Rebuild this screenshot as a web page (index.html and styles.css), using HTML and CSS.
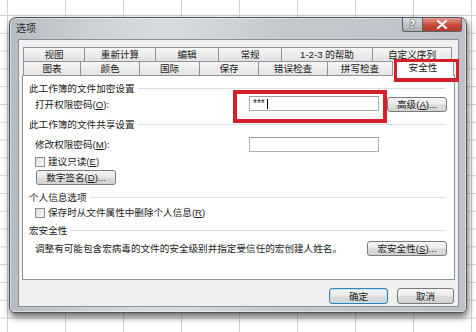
FILE: index.html
```html
<!DOCTYPE html>
<html lang="zh-CN">
<head>
    <meta charset="UTF-8">
    <title>选项</title>
    <link rel="stylesheet" href="styles.css">
</head>
<body>
<div class="dialog">
    <div class="titlebar">
        <span class="title">选项</span>
        <div class="cap_btns">
            <div class="cap_btn help">?</div>
            <div class="cap_btn close">
                <svg width="12" height="9" viewBox="0 0 12 9"><path d="M2 1 L10 8 M10 1 L2 8" stroke="#fff" stroke-width="2.2" stroke-linecap="round"/></svg>
            </div>
        </div>
    </div>
    <div class="client">
        <div class="tabs">
            <div class="tab_row row1">
                <div class="tab">视图</div>
                <div class="tab">重新计算</div>
                <div class="tab">编辑</div>
                <div class="tab">常规</div>
                <div class="tab">1-2-3 的帮助</div>
                <div class="tab">自定义序列</div>
            </div>
            <div class="tab_row row2">
                <div class="tab">图表</div>
                <div class="tab">颜色</div>
                <div class="tab">国际</div>
                <div class="tab">保存</div>
                <div class="tab">错误检查</div>
                <div class="tab">拼写检查</div>
                <div class="tab active">安全性</div>
            </div>
        </div>
        <div class="panel">
            <div class="group g1"><span>此工作簿的文件加密设置</span></div>
            <div class="field_row r_open">
                <span>打开权限密码(<u>O</u>):</span>
                <div class="input">***<i class="caret"></i></div>
                <div class="btn"><span>高级(<u>A</u>)...</span></div>
            </div>
            <div class="group g2"><span>此工作簿的文件共享设置</span></div>
            <div class="field_row r_modify">
                <span>修改权限密码(<u>M</u>):</span>
                <div class="input"></div>
            </div>
            <div class="check_row c1"><i class="box"></i><span>建议只读(<u>E</u>)</span></div>
            <div class="btn sign"><span>数字签名(<u>D</u>)...</span></div>
            <div class="group g3"><span>个人信息选项</span></div>
            <div class="check_row c2"><i class="box"></i><span>保存时从文件属性中删除个人信息(<u>R</u>)</span></div>
            <div class="group g4"><span>宏安全性</span></div>
            <div class="macro_row">
                <span>调整有可能包含宏病毒的文件的安全级别并指定受信任的宏创建人姓名。</span>
                <div class="btn macro"><span>宏安全性(<u>S</u>)...</span></div>
            </div>
        </div>
        <div class="footer">
            <div class="btn ok">确定</div>
            <div class="btn cancel">取消</div>
        </div>
    </div>
    <div class="mark mark_tab"></div>
    <div class="mark mark_pw"></div>
</div>
</body>
</html>
```

FILE: styles.css
```css
*{
    box-sizing: border-box;
    margin: 0;
    padding: 0;
}
body {
    width: 476px;
    height: 332px;
    overflow: hidden;
    padding: 17px 0 0 9px;
    background-color: #fff;
    background-image:
        linear-gradient(to right, #d2d2d2 1px, transparent 1px),
        linear-gradient(to bottom, #d2d2d2 1px, transparent 1px);
    background-size: 58px 17.8px;
    background-position: 7px 15px;
    font-family: "Liberation Sans", "Noto Sans CJK SC", sans-serif;
    font-size: 9.6px;
    color: #1a1a1a;
}
.dialog {
    position: relative;
    width: 458px;
    height: 296px;
    border: 1px solid #4f545a;
    border-radius: 7px 7px 5px 5px;
    background: linear-gradient(to right, #b6bcc2 0%, #cfd3d7 20%, #d9dcdf 35%, #c4c9ce 60%, #bcc2c8 100%);
    box-shadow: 1px 4px 7px rgba(0, 0, 0, 0.6), inset 0 0 0 1px rgba(255, 255, 255, 0.45);
}
.titlebar {
    height: 21px;
    display: flex;
    justify-content: space-between;
    padding-left: 6px;
}
.title {
    font-size: 10px;
    line-height: 21px;
    color: #2a2a2a;
}
.cap_btns {
    display: flex;
    margin-right: 4px;
}
.cap_btn {
    height: 14px;
    border: 1px solid #5b6066;
    border-top: 0;
    display: flex;
    justify-content: center;
    align-items: center;
}
.help {
    width: 20px;
    border-radius: 0 0 0 3px;
    border-right: 0;
    background: linear-gradient(#d8dcdf, #a9afb5);
    color: #fff;
    font-family: "DejaVu Sans", sans-serif;
    font-size: 10px;
    font-weight: 700;
    text-shadow: 0 0 2px #333, 0 0 1px #333;
}
.close {
    width: 40px;
    border-radius: 0 0 3px 0;
    background: linear-gradient(#e49a8e, #c9483a 55%, #b5392c);
}
.client {
    height: 268px;
    margin: 0 7px 0 8px;
    background: #f0f0f0;
    border: 1px solid #8b9096;
    padding: 7px 3px 0;
}
.tabs {
    margin-left: 1px;
}
.tab_row {
    display: flex;
    align-items: flex-end;
    height: 14px;
}
.tab {
    height: 14px;
    border: 1px solid #8f949a;
    border-bottom: 0;
    border-left: 0;
    background: linear-gradient(#f6f6f6, #e3e3e3);
    text-align: center;
    line-height: 13px;
    white-space: nowrap;
}
.tab:first-child {
    border-left: 1px solid #8f949a;
}
.row1 .tab:nth-child(1) { width: 62px; }
.row1 .tab:nth-child(2) { width: 71px; }
.row1 .tab:nth-child(3) { width: 63px; }
.row1 .tab:nth-child(4) { width: 63px; }
.row1 .tab:nth-child(5) { width: 91px; }
.row1 .tab:nth-child(6) { width: 79px; }
.row2 .tab:nth-child(1) { width: 58px; }
.row2 .tab:nth-child(2) { width: 59px; }
.row2 .tab:nth-child(3) { width: 60px; }
.row2 .tab:nth-child(4) { width: 59px; }
.row2 .tab:nth-child(5) { width: 69px; }
.row2 .tab:nth-child(6) { width: 65px; }
.tab.active {
    width: 61px;
    height: 17px;
    margin-bottom: -1px;
    background: #fff;
    position: relative;
    z-index: 2;
    line-height: 16px;
}
.panel {
    height: 205px;
    background: #fff;
    border: 1px solid #8f949a;
    padding: 0 9px 0 6px;
    display: flex;
    flex-direction: column;
}
.group {
    height: 13px;
    display: flex;
    align-items: center;
    gap: 3px;
    line-height: 13px;
}
.group::after {
    content: "";
    flex: 1;
    height: 1px;
    background: #d8dfe4;
}
.g1 { margin-top: 6px; }
.g2 { margin-top: 6px; }
.g3 { margin-top: 6px; }
.g4 { margin-top: 5px; }
.field_row {
    display: grid;
    grid-template-columns: 206px 130px 60px;
    column-gap: 8px;
    align-items: center;
    padding-left: 6px;
    height: 16px;
    line-height: 13px;
}
.r_open { margin-top: 1px; }
.r_modify { margin-top: 5px; }
.input {
    height: 15px;
    border: 1px solid #abadb3;
    border-top-color: #9a9ca2;
    background: #fff;
    font-size: 10px;
    line-height: 12px;
    padding-left: 3px;
    display: flex;
    align-items: center;
}
.caret {
    width: 1px;
    height: 10px;
    background: #000;
    margin-left: 2px;
}
.r_open .input {
    margin-top: -1px;
}
.btn {
    height: 15px;
    border: 1px solid #7a7a7a;
    border-radius: 3px;
    background: linear-gradient(#f4f4f4 0%, #ebebeb 45%, #dcdcdc 55%, #d2d2d2 100%);
    display: flex;
    justify-content: center;
    align-items: center;
    line-height: 13px;
    white-space: nowrap;
}
.check_row {
    height: 12px;
    display: flex;
    align-items: center;
    gap: 3px;
    padding-left: 6px;
    line-height: 12px;
}
.c1 { margin-top: 4px; }
.c2 { margin-top: 3px; }
.box {
    width: 10px;
    height: 10px;
    border: 1px solid #8e8f8f;
    background: linear-gradient(135deg, #dcdcdc, #fbfbfb);
}
.sign {
    width: 80px;
    margin: 2px 0 0 7px;
}
.macro_row {
    margin-top: 4px;
    height: 15px;
    display: flex;
    justify-content: space-between;
    align-items: center;
    padding-left: 6px;
    line-height: 13px;
}
.macro {
    width: 80px;
    margin-right: -2px;
}
.footer {
    display: flex;
    justify-content: flex-end;
    gap: 9px;
    margin-top: 8px;
    padding-right: 1px;
}
.footer .btn {
    height: 16px;
}
.ok {
    width: 59px;
    border-color: #3c7fb1;
    box-shadow: inset 0 0 0 1px #b9e2f5;
}
.cancel {
    width: 57px;
}
.mark {
    position: absolute;
    border: 4px solid #d4202b;
    z-index: 5;
}
.mark_tab {
    left: 384px;
    top: 41px;
    width: 65px;
    height: 23px;
    border-width: 3px 3px 4px 3px;
}
.mark_pw {
    left: 223px;
    top: 72px;
    width: 154px;
    height: 33px;
}
```
